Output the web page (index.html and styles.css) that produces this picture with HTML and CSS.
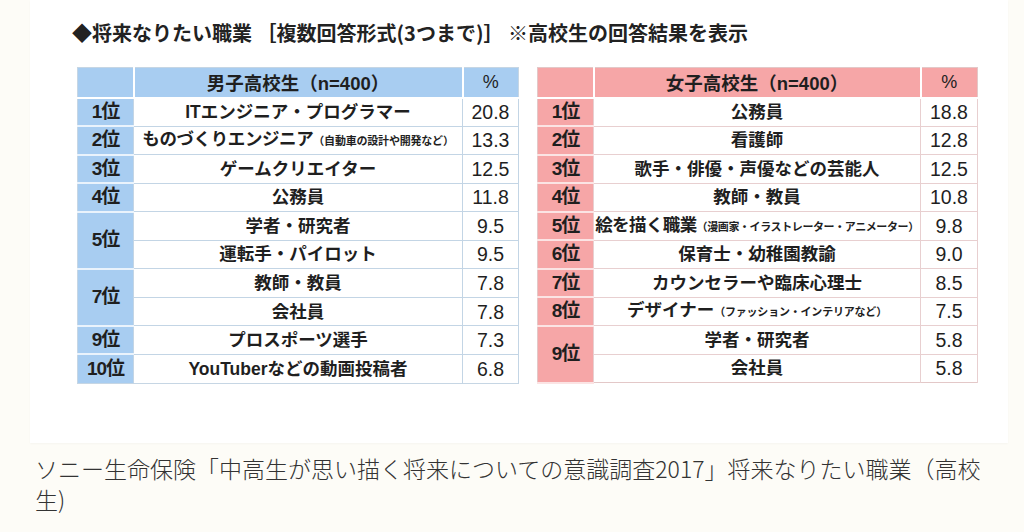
FILE: index.html
```html
<!DOCTYPE html>
<html lang="ja">
<head>
<meta charset="utf-8">
<title>将来なりたい職業</title>
<link rel="stylesheet" href="styles.css">
</head>
<body>
<div class="page">
  <div class="panel">
    <h2 class="title">◆将来なりたい職業 ［複数回答形式(3つまで)］ ※高校生の回答結果を表示</h2>
    <div class="tables">
      <table class="rank boys">
        <colgroup><col class="c-rank"><col class="c-name"><col class="c-pct"></colgroup>
        <tr class="head"><th></th><th>男子高校生（n=400）</th><th class="pct">%</th></tr>
        <tr><td class="pos">1位</td><td class="name">ITエンジニア・プログラマー</td><td class="pct">20.8</td></tr>
        <tr><td class="pos">2位</td><td class="name tight">ものづくりエンジニア<small>（自動車の設計や開発など）</small></td><td class="pct">13.3</td></tr>
        <tr><td class="pos">3位</td><td class="name">ゲームクリエイター</td><td class="pct">12.5</td></tr>
        <tr><td class="pos">4位</td><td class="name">公務員</td><td class="pct">11.8</td></tr>
        <tr><td class="pos" rowspan="2">5位</td><td class="name">学者・研究者</td><td class="pct">9.5</td></tr>
        <tr><td class="name">運転手・パイロット</td><td class="pct">9.5</td></tr>
        <tr><td class="pos" rowspan="2">7位</td><td class="name">教師・教員</td><td class="pct">7.8</td></tr>
        <tr><td class="name">会社員</td><td class="pct">7.8</td></tr>
        <tr><td class="pos">9位</td><td class="name">プロスポーツ選手</td><td class="pct">7.3</td></tr>
        <tr><td class="pos">10位</td><td class="name">YouTuberなどの動画投稿者</td><td class="pct">6.8</td></tr>
      </table>
      <table class="rank girls">
        <colgroup><col class="c-rank"><col class="c-name"><col class="c-pct"></colgroup>
        <tr class="head"><th></th><th>女子高校生（n=400）</th><th class="pct">%</th></tr>
        <tr><td class="pos">1位</td><td class="name">公務員</td><td class="pct">18.8</td></tr>
        <tr><td class="pos">2位</td><td class="name">看護師</td><td class="pct">12.8</td></tr>
        <tr><td class="pos">3位</td><td class="name">歌手・俳優・声優などの芸能人</td><td class="pct">12.5</td></tr>
        <tr><td class="pos">4位</td><td class="name">教師・教員</td><td class="pct">10.8</td></tr>
        <tr><td class="pos">5位</td><td class="name tighter">絵を描く職業<small>（漫画家・イラストレーター・アニメーター）</small></td><td class="pct">9.8</td></tr>
        <tr><td class="pos">6位</td><td class="name">保育士・幼稚園教諭</td><td class="pct">9.0</td></tr>
        <tr><td class="pos">7位</td><td class="name">カウンセラーや臨床心理士</td><td class="pct">8.5</td></tr>
        <tr><td class="pos">8位</td><td class="name">デザイナー<small>（ファッション・インテリアなど）</small></td><td class="pct">7.5</td></tr>
        <tr><td class="pos" rowspan="2">9位</td><td class="name">学者・研究者</td><td class="pct">5.8</td></tr>
        <tr><td class="name">会社員</td><td class="pct">5.8</td></tr>
      </table>
    </div>
  </div>
  <p class="caption">ソニー生命保険「中高生が思い描く将来についての意識調査2017」将来なりたい職業（高校生)</p>
</div>
</body>
</html>
```

FILE: styles.css
```css
html, body {
  margin: 0;
  padding: 0;
}
body {
  background: #fdfcf7;
  font-family: "Noto Sans CJK JP", "Noto Sans", sans-serif;
  color: #222;
}
.page {
  width: 1024px;
  height: 532px;
  overflow: hidden;
}
.panel {
  margin-left: 30px;
  width: 978px;
  height: 443px;
  background: #fff;
  box-sizing: border-box;
  padding-top: 20px;
  box-shadow: 0 1px 2px rgba(0, 0, 0, 0.03);
}
.title {
  margin: 0 0 0 42px;
  font-size: 20px;
  line-height: 26px;
  font-weight: 700;
  color: #222;
  white-space: nowrap;
}
.tables {
  display: flex;
  gap: 18px;
  margin-top: 21px;
  margin-left: 47px;
}
.rank {
  border-collapse: collapse;
  table-layout: fixed;
  font-family: "Liberation Sans", "Noto Sans CJK JP", sans-serif;
  font-weight: 700;
  color: #1f1f1f;
}
.boys { width: 442px; border: 1px solid #c6d6e4; }
.girls { width: 441px; border: 1px solid #e3c8c8; }
.c-rank { width: 56px; }
.boys .c-name { width: 329px; }
.girls .c-name { width: 327px; }
.rank tr { height: 28.5px; }
.rank tr.head { height: 30px; }
.rank th {
  font-weight: 700;
  font-size: 18.5px;
  padding: 0;
  text-align: center;
  border: 2px solid #fff;
  border-top: 0;
}
.rank th:first-child { border-left: 0; }
.rank th:last-child { border-right: 0; }
.boys th { background: #a8cdf1; }
.girls th { background: #f6a6a7; }
.rank th.pct { font-weight: 400; font-size: 18px; }
.rank td {
  padding: 0;
  text-align: center;
  white-space: nowrap;
  font-size: 17.5px;
  line-height: 20px;
}
.rank td.pos {
  font-size: 19px;
  letter-spacing: -1px;
  border-bottom: 2px solid #eaf3fc;
}
.boys td.pos { background: #a8cdf1; }
.girls td.pos { background: #f6a6a7; border-bottom-color: #fbe4e4; }
.rank tr:last-child td { border-bottom: 0; }
.boys td.name, .boys td.pct { border: 1px solid #c3d5e5; }
.girls td.name, .girls td.pct { border: 1px solid #e8cfd0; }
.rank td.pct {
  font-weight: 400;
  font-size: 19.5px;
}
.rank td.name small {
  font-size: 11px;
  letter-spacing: -0.2px;
}
.rank td.tight { letter-spacing: -0.4px; }
.rank td.tighter { letter-spacing: -0.6px; }
.rank td.tighter small { letter-spacing: -0.4px; }
.caption {
  margin: 10px 0 0 35px;
  width: 960px;
  font-size: 23px;
  line-height: 31px;
  font-weight: 300;
  color: #333;
}
```
